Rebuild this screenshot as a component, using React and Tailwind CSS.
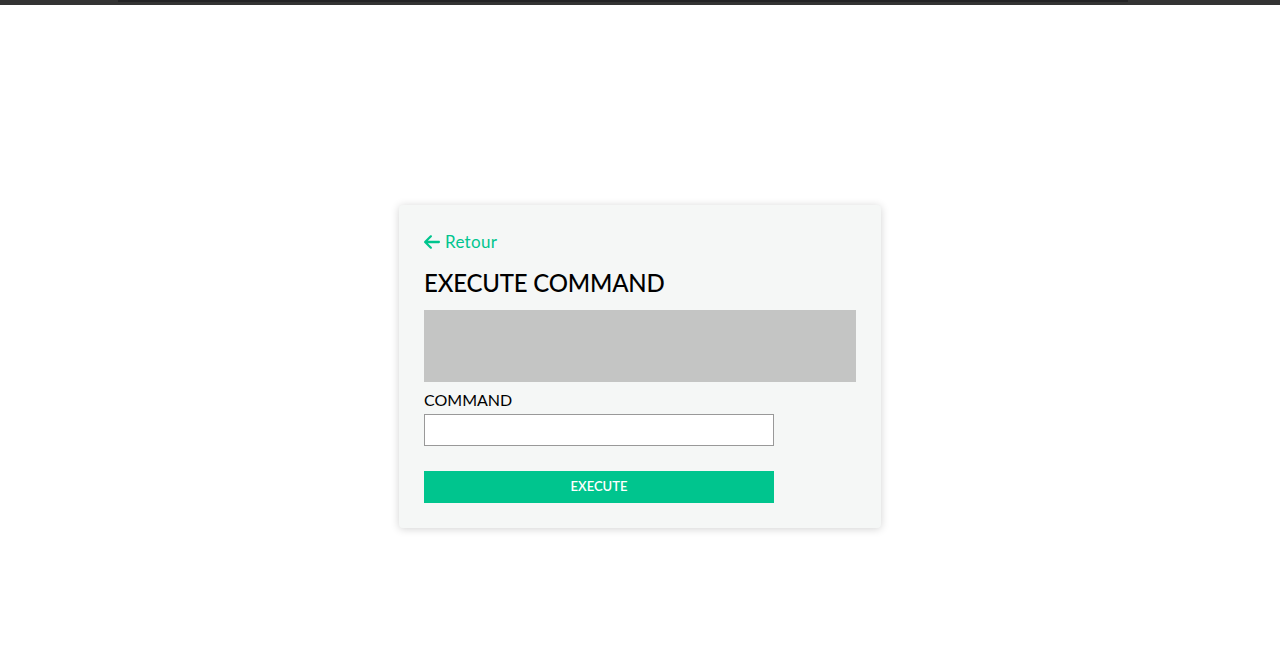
import { useState } from "react";

function ArrowLeft() {
  return (
    <svg width="16" height="14" viewBox="0 80 448 352" className="inline-block" fill="currentColor">
      <path d="M9.4 233.4c-12.5 12.5-12.5 32.8 0 45.3l160 160c12.5 12.5 32.8 12.5 45.3 0s12.5-32.8 0-45.3L109.2 288H416c17.7 0 32-14.3 32-32s-14.3-32-32-32H109.3l105.3-105.4c12.5-12.5 12.5-32.8 0-45.3s-32.8-12.5-45.3 0l-160 160z" />
    </svg>
  );
}

function App() {
  const [command, setCommand] = useState("");

  return (
    <div className="min-h-[656px] bg-white font-['Lato','Liberation_Sans',sans-serif]">
      <div className="h-[5px] bg-[#333333] px-[118px]">
        <div className="h-[2px] bg-[#232325] w-[1010px]"></div>
      </div>
      <div className="flex justify-center pt-[200px]">
        <div className="w-[482px] bg-[#f5f7f6] rounded-[4px] shadow-[0_1px_8px_rgba(0,0,0,0.18)] p-[25px] pt-[27px]">
          <a href="#" className="flex items-center gap-[5px] text-[#00c58e] text-[17px] leading-[20px]">
            <ArrowLeft />
            <span className="tracking-[0.3px]">Retour</span>
          </a>
          <h1 className="mt-[16px] text-[24px] leading-[30px] font-medium tracking-[-0.2px] text-black">
            EXECUTE COMMAND
          </h1>
          <div className="mt-[12px] h-[72px] bg-[#c4c5c4]"></div>
          <label className="block mt-[8px] text-[16px] leading-[20px] text-black">
            COMMAND
          </label>
          <input
            type="text"
            value={command}
            onChange={(e) => setCommand(e.target.value)}
            className="block mt-[4px] w-[350px] h-[32px] bg-white border border-[#999999] outline-none px-2"
          />
          <button className="block mt-[25px] w-[350px] h-[32px] bg-[#00c58e] text-white text-[13px] font-semibold">
            EXECUTE
          </button>
        </div>
      </div>
    </div>
  );
}

export default App;
